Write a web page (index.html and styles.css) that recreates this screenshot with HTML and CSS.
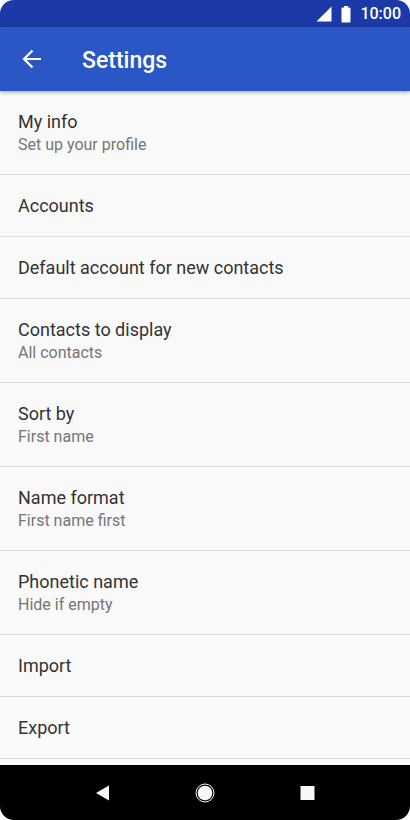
FILE: index.html
```html
<!DOCTYPE html>
<html lang="en">
<head>
<meta charset="utf-8">
<meta name="viewport" content="width=device-width, initial-scale=1">
<title>Settings</title>
<link rel="stylesheet" href="styles.css">
</head>
<body>
<div class="phone">
  <div class="status-bar">
    <svg class="signal" width="16" height="16" viewBox="0 0 16 16" aria-hidden="true"><path d="M15.5 .5V15.5H.5Z" fill="currentColor"/></svg>
    <svg class="battery" width="10" height="17" viewBox="0 0 10 17" aria-hidden="true"><path d="M3 0h4v1.500h1.500q1 0 1 1v13q0 1-1 1h-7q-1 0-1-1v-13q0-1 1-1H3Z" fill="currentColor"/></svg>
    <time class="clock">10:00</time>
  </div>
  <header class="app-bar">
    <button class="back" type="button" aria-label="Back">
      <svg width="20" height="20" viewBox="0 0 20 20" aria-hidden="true"><path d="M19 10H2.500M10.500 1.500L2 10L10.500 18.500" fill="none" stroke="currentColor" stroke-width="2.200"/></svg>
    </button>
    <h1 class="title">Settings</h1>
  </header>
  <main class="content">
    <ul class="settings">
      <li><button class="row" type="button"><span class="name">My info</span><span class="value">Set up your profile</span></button></li>
      <li><button class="row" type="button"><span class="name">Accounts</span></button></li>
      <li><button class="row" type="button"><span class="name">Default account for new contacts</span></button></li>
      <li><button class="row" type="button"><span class="name">Contacts to display</span><span class="value">All contacts</span></button></li>
      <li><button class="row" type="button"><span class="name">Sort by</span><span class="value">First name</span></button></li>
      <li><button class="row" type="button"><span class="name">Name format</span><span class="value">First name first</span></button></li>
      <li><button class="row" type="button"><span class="name">Phonetic name</span><span class="value">Hide if empty</span></button></li>
      <li><button class="row" type="button"><span class="name">Import</span></button></li>
      <li><button class="row" type="button"><span class="name">Export</span></button></li>
    </ul>
  </main>
  <nav class="nav-bar" aria-label="System navigation">
    <button class="nav-button" type="button" aria-label="Back"><svg width="20" height="20" viewBox="0 0 20 20"><path d="M3 10L16 2.500V17.500Z" fill="currentColor"/></svg></button>
    <button class="nav-button" type="button" aria-label="Home"><svg width="20" height="20" viewBox="0 0 20 20"><circle cx="10" cy="10" r="7.300" fill="currentColor"/><circle cx="10" cy="10" r="9" fill="none" stroke="currentColor" stroke-width="1"/></svg></button>
    <button class="nav-button" type="button" aria-label="Recent apps"><svg width="20" height="20" viewBox="0 0 20 20"><path d="M2.500 3H16.500V17H2.500Z" fill="currentColor"/></svg></button>
  </nav>
</div>
</body>
</html>
```

FILE: styles.css
```css
* {
  box-sizing: border-box;
}

body {
  margin: 0;
  background: #fff;
  font-family: Roboto, "Liberation Sans", sans-serif;
}

button {
  margin: 0;
  padding: 0;
  border: 0;
  background: none;
  color: inherit;
  font: inherit;
}

svg {
  display: block;
}

.phone {
  display: flex;
  flex-direction: column;
  height: 100vh;
  overflow: hidden;
  border-radius: 14px;
  background: #f9f9f9;
}

.status-bar {
  display: flex;
  flex: none;
  align-items: center;
  justify-content: flex-end;
  height: 27px;
  padding: 1px 9px 0;
  background: #1c39a8;
  color: #fff;
}

.battery {
  margin: 0 9px;
}

.clock {
  font-size: 16px;
  font-weight: 500;
  line-height: 20px;
}

.app-bar {
  z-index: 1;
  display: flex;
  flex: none;
  align-items: center;
  gap: 40px;
  height: 64px;
  padding: 0 22px;
  background: #2a56c6;
  box-shadow: 0 1px 4px rgba(0, 0, 0, 0.4);
  color: #fff;
}

.title {
  margin: 0;
  padding-top: 4px;
  font-size: 23px;
  font-weight: 500;
  line-height: 28px;
}

.content {
  flex: 1;
  min-height: 0;
  overflow: hidden;
}

.settings {
  margin: 0;
  padding: 0;
  list-style: none;
}

.row {
  display: block;
  width: 100%;
  padding: 19px 18px;
  border-bottom: 1px solid #dcdcdc;
  text-align: left;
}

.name,
.value {
  display: block;
}

.name {
  color: #333;
  font-size: 18px;
  line-height: 23px;
}

.value {
  margin-top: 2px;
  color: #757575;
  font-size: 16px;
  line-height: 20px;
}

.nav-bar {
  display: flex;
  flex: none;
  align-items: center;
  justify-content: center;
  height: 55px;
  background: #000;
  color: #f8f8f8;
}

.nav-button {
  display: flex;
  justify-content: center;
  width: 25%;
}
```
